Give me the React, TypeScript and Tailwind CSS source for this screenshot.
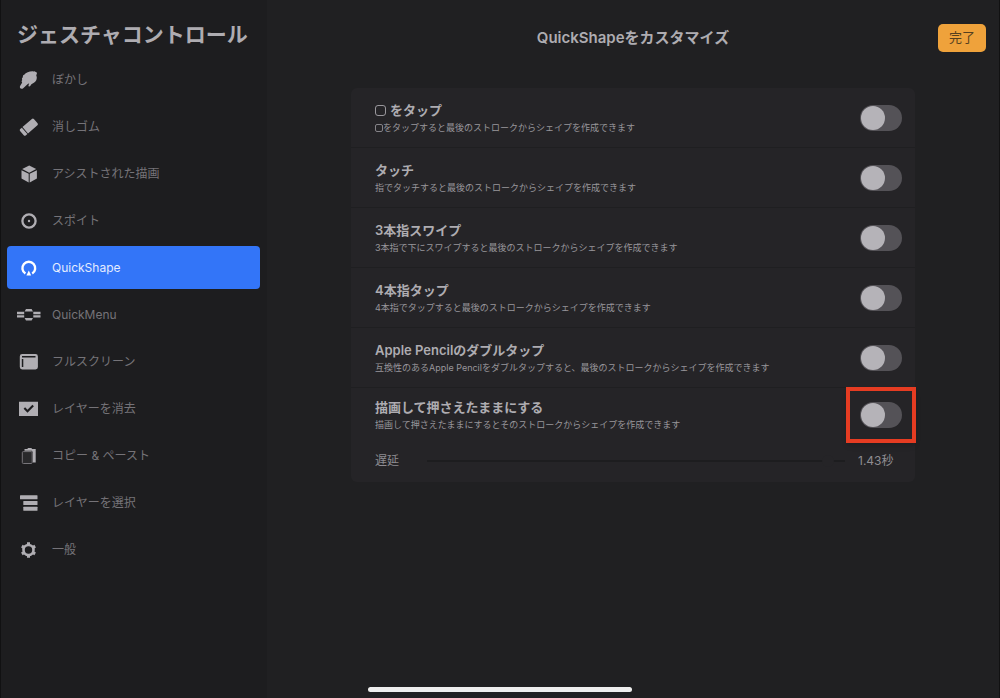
import { useState } from "react";
import type { ReactNode } from "react";
import clsx from "clsx";

const Icon = ({ children }: { children: ReactNode }) => (
  <svg
    viewBox="0 0 24 24"
    className="h-6 w-6 shrink-0"
    fill="currentColor"
    aria-hidden="true"
  >
    {children}
  </svg>
);

const menu = [
  {
    id: "smudge",
    label: "ぼかし",
    icon: (
      <Icon>
        <path d="M16.2 3.400L17.400 3.200 19.800 4.600 19.900 6 19.200 7l.6 2.200c.1 2.400-.9 4.300-2.900 5.500l-2.500 1.500-1.200 1.900c-.7.900-2 .4-1.700-.8l.7-2-1.700 1-4.300 4c-1.800 1.400-4.200-.1-3.100-2.200l2.100-3.500c-.8-1-.6-1.900.1-2.700-.7-1.100-.3-2 .6-2.700-.2-1.300.3-2.100 1.300-2.400 1.800-2 5.500-3.700 9-3.400z" />
      </Icon>
    ),
  },
  {
    id: "eraser",
    label: "消しゴム",
    icon: (
      <Icon>
        <g transform="rotate(-41 12 12)">
          <path d="M7 7.800H19.500a1.400 1.400 0 0 1 1.400 1.400V14.800a1.400 1.400 0 0 1-1.400 1.400H7z" />
          <path d="M6.200 7.800H4a1.400 1.400 0 0 0-1.400 1.400V14.800A1.400 1.400 0 0 0 4 16.200H6.200z" />
        </g>
      </Icon>
    ),
  },
  {
    id: "assist",
    label: "アシストされた描画",
    icon: (
      <Icon>
        <path d="M12.200 3.500L19.200 7.100 12.200 10.700 5.200 7.100z" />
        <path d="M4.500 8.200L11.700 11.800V20.400L4.500 16.600z" />
        <path d="M19.900 8.200L12.700 11.800V20.400L19.900 16.600z" />
      </Icon>
    ),
  },
  {
    id: "eyedropper",
    label: "スポイト",
    icon: (
      <Icon>
        <circle cx="12" cy="12" r="6.600" fill="none" stroke="currentColor" strokeWidth="2.300" />
        <circle cx="12" cy="12" r="1.200" />
      </Icon>
    ),
  },
  {
    id: "quickshape",
    label: "QuickShape",
    icon: (
      <Icon>
        <path
          d="M8.400 17.600A6.400 6.400 0 1 1 15.200 17.600"
          fill="none"
          stroke="currentColor"
          strokeWidth="2.400"
        />
        <path d="M11.800 14.600L14.200 19.600H9.400z" />
      </Icon>
    ),
  },
  {
    id: "quickmenu",
    label: "QuickMenu",
    icon: (
      <Icon>
        <path d="M0 8.800h7.200v2.400H0zM0 12.200h7.200v2.400H0zM16.300 8.800h7.200v2.400h-7.200zM16.300 12.200h7.200v2.400h-7.200z" />
        <path d="M9 6h5.600l1.400 2.400H7.600zM7.600 15h8.400l-1.400 2.400H9z" />
      </Icon>
    ),
  },
  {
    id: "fullscreen",
    label: "フルスクリーン",
    icon: (
      <Icon>
        <path
          fillRule="evenodd"
          d="M5.200 4h13.300a2.400 2.400 0 0 1 2.400 2.400v10.700a2.400 2.400 0 0 1-2.400 2.400H5.200a2.400 2.400 0 0 1-2.400-2.400V6.400A2.400 2.400 0 0 1 5.200 4zM5 6v1.400h13.500V6zM4.800 9v8h1.500V9z"
        />
      </Icon>
    ),
  },
  {
    id: "clear",
    label: "レイヤーを消去",
    icon: (
      <Icon>
        <path
          fillRule="evenodd"
          d="M2 4.800h19v14.200H2zM8.100 10.300L6.600 11.800l3.900 3.900 6.400-6.400L15.400 7.800l-4.900 4.900z"
        />
      </Icon>
    ),
  },
  {
    id: "copy",
    label: "コピー & ペースト",
    icon: (
      <Icon>
        <path d="M7.500 5h2.700l.9-.9h3.200l.9.900H18.700v13.600h-2.900V8.200l-1-1.400H7.500z" />
        <rect
          x="5.300"
          y="7.600"
          width="9.900"
          height="11.900"
          rx="1"
          fill="#29292b"
          stroke="#77757a"
          strokeWidth="1"
        />
      </Icon>
    ),
  },
  {
    id: "select",
    label: "レイヤーを選択",
    icon: (
      <Icon>
        <rect x="3" y="4.300" width="17.500" height="4" rx="0.500" />
        <rect x="6.300" y="10" width="14.200" height="4" rx="0.500" />
        <rect x="6.300" y="15.700" width="14.200" height="4" rx="0.500" />
      </Icon>
    ),
  },
  {
    id: "general",
    label: "一般",
    icon: (
      <Icon>
        <circle cx="11.500" cy="12" r="5" fill="none" stroke="currentColor" strokeWidth="2.600" />
        <path
          d="M11.500 4.300v3M11.500 16.700v3M4.830 8.150l2.600 1.500M15.570 14.350l2.600 1.500M4.830 15.850l2.600-1.500M15.570 9.650l2.600-1.500"
          stroke="currentColor"
          strokeWidth="3"
        />
      </Icon>
    ),
  },
];

const settings = [
  {
    id: "square",
    title: "をタップ",
    text: "をタップすると最後のストロークからシェイプを作成できます",
    square: true,
  },
  {
    id: "touch",
    title: "タッチ",
    text: "指でタッチすると最後のストロークからシェイプを作成できます",
  },
  {
    id: "swipe3",
    title: "3本指スワイプ",
    text: "3本指で下にスワイプすると最後のストロークからシェイプを作成できます",
  },
  {
    id: "tap4",
    title: "4本指タップ",
    text: "4本指でタップすると最後のストロークからシェイプを作成できます",
  },
  {
    id: "pencil",
    title: "Apple Pencilのダブルタップ",
    text: "互換性のあるApple Pencilをダブルタップすると、最後のストロークからシェイプを作成できます",
  },
];

type RowProps = {
  id: string;
  title: string;
  text: string;
  square?: boolean;
  highlight?: boolean;
};

const SettingRow = ({ id, title, text, square, highlight }: RowProps) => (
  <div className="flex items-center justify-between">
    <label htmlFor={id} className="min-w-0">
      <span className="flex items-center gap-1 text-[13px] leading-5 font-semibold text-[#aeacb1]">
        {square && (
          <span className="h-[11px] w-[11px] rounded-[3px] border border-[#99979c]" />
        )}
        {title}
      </span>
      <span className="flex items-center text-[9px] leading-4 text-[#98969b]">
        {square && (
          <span className="h-2 w-2 rounded-[2px] border border-[#858388]" />
        )}
        {text}
      </span>
    </label>
    <div className="relative flex shrink-0">
      <input
        id={id}
        type="checkbox"
        role="switch"
        className="h-[26px] w-[42px] cursor-pointer appearance-none rounded-full bg-[#545257] p-px before:block before:h-6 before:w-6 before:rounded-full before:bg-[#b5b3b8] before:transition-transform checked:bg-[#3478f6] checked:before:translate-x-4"
      />
      {highlight && (
        <div className="pointer-events-none absolute -inset-x-[14px] -inset-y-[15px] border-4 border-[#e63c22] shadow-md" />
      )}
    </div>
  </div>
);

export default function App() {
  const [active, setActive] = useState("quickshape");
  const [delay, setDelay] = useState(1.43);

  return (
    <div className="flex min-h-screen bg-[#202022] font-['Inter','Noto_Sans_CJK_JP',sans-serif]">
      <aside className="w-[267px] shrink-0 border-l border-[#111112] bg-[#1d1d1f] pr-[7px] pl-[6px]">
        <h1 className="px-2.5 pt-5 pb-2 text-[21px] leading-[30px] font-semibold text-[#aeacb1]">
          ジェスチャコントロール
        </h1>
        <nav className="flex flex-col gap-1">
          {menu.map((item) => (
            <button
              key={item.id}
              type="button"
              onClick={() => setActive(item.id)}
              className={clsx(
                "flex h-[43px] w-full cursor-pointer items-center gap-[11px] rounded-[4px] px-2.5 text-left text-xs",
                active === item.id
                  ? "bg-[#3375f8] text-white"
                  : "text-[#b0aeb3]"
              )}
            >
              {item.icon}
              <span
                className={
                  active === item.id ? "text-[#e4ecff]" : "text-[#757378]"
                }
              >
                {item.label}
              </span>
            </button>
          ))}
        </nav>
      </aside>

      <main className="min-w-0 flex-1 border-r border-[#111112]">
        <header className="grid grid-cols-[1fr_auto_1fr] items-center px-[13px] pt-6 pb-9">
          <h2 className="col-start-2 text-[15px] leading-7 font-semibold text-[#aeacb1]">
            QuickShapeをカスタマイズ
          </h2>
          <button
            type="button"
            className="h-7 w-12 cursor-pointer justify-self-end rounded-[5px] bg-[#efa23b] text-[13px] text-[#54401f]"
          >
            完了
          </button>
        </header>

        <section className="mx-auto max-w-[564px] rounded-md bg-[#252427]">
          {settings.map((item) => (
            <div
              key={item.id}
              className="border-b border-[#1f1f21] pt-3 pr-[13px] pb-[11px] pl-6"
            >
              <SettingRow {...item} />
            </div>
          ))}
          <div className="pt-[9px] pr-[13px] pb-2.5 pl-6">
            <SettingRow
              id="hold"
              title="描画して押さえたままにする"
              text="描画して押さえたままにするとそのストロークからシェイプを作成できます"
              highlight
            />
            <div className="mt-[17px] flex items-center text-xs leading-[22px] text-[#8e8c91]">
              <label htmlFor="delay" className="w-[52px]">
                遅延
              </label>
              <input
                id="delay"
                type="range"
                min={0}
                max={1.47}
                step={0.01}
                value={delay}
                onChange={(e) => setDelay(Number(e.target.value))}
                className="h-3 min-w-0 flex-1 cursor-pointer appearance-none bg-transparent [&::-webkit-slider-runnable-track]:h-0.5 [&::-webkit-slider-runnable-track]:bg-[#1d1d1f] [&::-webkit-slider-thumb]:-mt-[5px] [&::-webkit-slider-thumb]:h-3 [&::-webkit-slider-thumb]:w-3 [&::-webkit-slider-thumb]:appearance-none [&::-webkit-slider-thumb]:rounded-full [&::-webkit-slider-thumb]:bg-[#252427]"
              />
              <output htmlFor="delay" className="w-[57px] pl-[13px]">
                {delay.toFixed(2)}秒
              </output>
            </div>
          </div>
        </section>
      </main>

      <div className="fixed bottom-1.5 left-1/2 h-[5px] w-[264px] -translate-x-1/2 rounded-full bg-[#eeeeee]" />
    </div>
  );
}
